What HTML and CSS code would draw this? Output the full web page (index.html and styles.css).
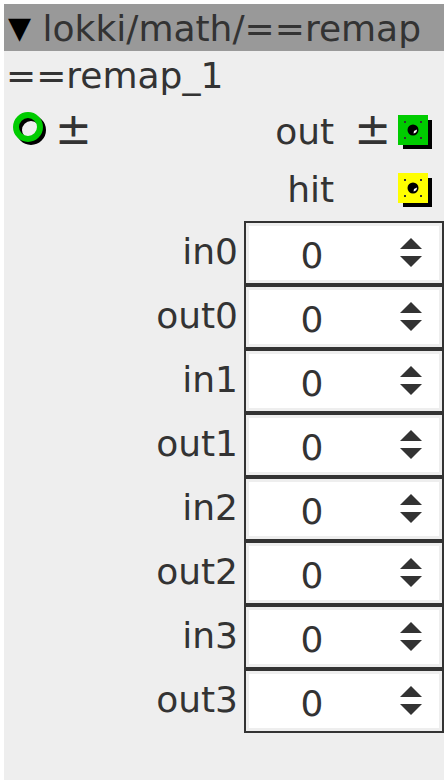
FILE: index.html
```html
<!DOCTYPE html>
<html>
<head>
<meta charset="utf-8">
<link rel="stylesheet" href="styles.css">
</head>
<body>
<div class="panel">
  <div class="title"><span class="tri">▼</span> lokki/math/==remap</div>
  <div class="name">==remap_1</div>
  <div class="ports">
    <div class="left">
      <svg class="ring" width="40" height="40" viewBox="0 0 40 40">
        <circle cx="18" cy="18" r="12" fill="none" stroke="#000" stroke-width="6"/>
        <circle cx="15" cy="15" r="12" fill="none" stroke="#00cc00" stroke-width="6"/>
      </svg>
      <span class="pm">±</span>
    </div>
    <div class="right">
      <span class="plabel">out</span>
      <span class="pm">±</span>
      <svg class="sq" width="36" height="36" viewBox="0 0 36 36">
        <rect x="5" y="5" width="29" height="29" fill="#000"/>
        <rect x="0" y="0" width="30" height="30" fill="#00cc00"/>
        <circle cx="15" cy="15" r="5.5" fill="#000"/>
        <path d="M15.5 18.5 A4 4 0 0 0 19 14.5 L16 16 Z" fill="#fff"/>
        <rect x="6" y="6" width="2" height="2" fill="#333"/>
        <rect x="22" y="6" width="2" height="2" fill="#333"/>
        <rect x="6" y="22" width="2" height="2" fill="#333"/>
        <rect x="22" y="22" width="2" height="2" fill="#333"/>
      </svg>
    </div>
  </div>
  <div class="ports hitrow">
    <div class="right">
      <span class="plabel">hit</span>
      <span class="pm ghost">±</span>
      <svg class="sq" width="36" height="36" viewBox="0 0 36 36">
        <rect x="5" y="5" width="29" height="29" fill="#000"/>
        <rect x="0" y="0" width="30" height="30" fill="#ffff00"/>
        <circle cx="15" cy="15" r="5.5" fill="#000"/>
        <path d="M15.5 18.5 A4 4 0 0 0 19 14.5 L16 16 Z" fill="#fff"/>
        <rect x="6" y="6" width="2" height="2" fill="#333"/>
        <rect x="22" y="6" width="2" height="2" fill="#333"/>
        <rect x="6" y="22" width="2" height="2" fill="#333"/>
        <rect x="22" y="22" width="2" height="2" fill="#333"/>
      </svg>
    </div>
  </div>
  <div class="params">
    <div class="lbl">in0</div><div class="box"><span class="val">0</span><span class="spin"><i class="up"></i><i class="down"></i></span></div>
    <div class="lbl">out0</div><div class="box"><span class="val">0</span><span class="spin"><i class="up"></i><i class="down"></i></span></div>
    <div class="lbl">in1</div><div class="box"><span class="val">0</span><span class="spin"><i class="up"></i><i class="down"></i></span></div>
    <div class="lbl">out1</div><div class="box"><span class="val">0</span><span class="spin"><i class="up"></i><i class="down"></i></span></div>
    <div class="lbl">in2</div><div class="box"><span class="val">0</span><span class="spin"><i class="up"></i><i class="down"></i></span></div>
    <div class="lbl">out2</div><div class="box"><span class="val">0</span><span class="spin"><i class="up"></i><i class="down"></i></span></div>
    <div class="lbl">in3</div><div class="box"><span class="val">0</span><span class="spin"><i class="up"></i><i class="down"></i></span></div>
    <div class="lbl">out3</div><div class="box"><span class="val">0</span><span class="spin"><i class="up"></i><i class="down"></i></span></div>
  </div>
</div>
</body>
</html>
```
FILE: styles.css
```css
html, body {
  margin: 0;
  padding: 0;
  background: #fff;
}
body {
  padding: 4px;
  font-family: "DejaVu Sans", sans-serif;
  color: #333;
}
.panel {
  width: 440px;
  height: 776px;
  background: #eee;
  overflow: hidden;
}
.title {
  background: #999;
  height: 47px;
  line-height: 47px;
  font-size: 36px;
  padding-left: 4px;
  white-space: nowrap;
}
.tri {
  color: #000;
  font-size: 30px;
  vertical-align: 3px;
}
.name {
  height: 52px;
  line-height: 50px;
  font-size: 36px;
  padding-left: 2px;
  white-space: nowrap;
}
.ports {
  display: flex;
  justify-content: space-between;
  align-items: center;
  height: 56px;
}
.hitrow {
  justify-content: flex-end;
  height: 60px;
}
.left, .right {
  display: flex;
  align-items: center;
}
.left {
  padding-left: 9px;
  gap: 2px;
}
.right {
  padding-right: 10px;
}
.plabel {
  font-size: 36px;
  margin-right: 20px;
}
.pm {
  font-size: 44px;
  line-height: 44px;
  margin-right: 7px;
  margin-top: -4px;
}
.ghost { visibility: hidden; }
.left .pm { margin-right: 0; }
.sq { margin-top: 4px; }
.ring { margin-top: 2px; }
.params {
  display: grid;
  grid-template-columns: 234px 200px;
  column-gap: 6px;
  padding-top: 2px;
}
.lbl {
  height: 64px;
  line-height: 62px;
  text-align: right;
  font-size: 36px;
  white-space: nowrap;
}
.box {
  height: 64px;
  box-sizing: border-box;
  border: 2px solid #333;
  background: #fff;
  box-shadow: inset 0 0 0 3px #eee;
  display: flex;
  align-items: center;
  position: relative;
}
.val {
  flex: 1;
  text-align: center;
  font-size: 36px;
  padding-right: 64px;
  padding-top: 4px;
}
.spin {
  position: absolute;
  right: 20px;
  top: 15px;
  display: flex;
  flex-direction: column;
  gap: 7px;
}
.spin i {
  display: block;
  width: 0;
  height: 0;
  border-left: 11px solid transparent;
  border-right: 11px solid transparent;
}
.up { border-bottom: 11px solid #333; }
.down { border-top: 11px solid #333; }
```
